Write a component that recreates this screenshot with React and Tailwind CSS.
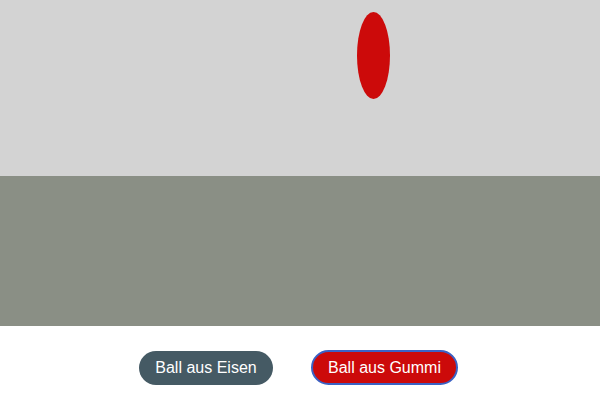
import React from 'react';

// Fallender Ball: Spielfeld mit Boden und zwei Auswahlknöpfen
const App = () => {
  return (
    <div className="w-[600px] h-[400px] bg-white font-['Liberation_Sans',Arial,sans-serif]">
      {/* Himmel */}
      <div className="relative h-[176px] bg-[#d3d3d3]">
        <div className="absolute left-[357px] top-[12px] w-[33px] h-[87px] rounded-[50%] bg-[#cc0a0a]" />
      </div>

      {/* Boden */}
      <div className="h-[150px] bg-[#8a8f85]" />

      {/* Knöpfe */}
      <div className="flex justify-center gap-[38px] pt-[25px] pr-[3px]">
        <button className="w-[134px] h-[34px] rounded-full bg-[#455a64] text-white text-[16px]">
          Ball aus Eisen
        </button>
        <button className="w-[147px] h-[35px] -mt-px rounded-full bg-[#cc0a0a] text-white text-[16px] border-2 border-[#3b62c4]">
          Ball aus Gummi
        </button>
      </div>
    </div>
  );
};

export default App;
